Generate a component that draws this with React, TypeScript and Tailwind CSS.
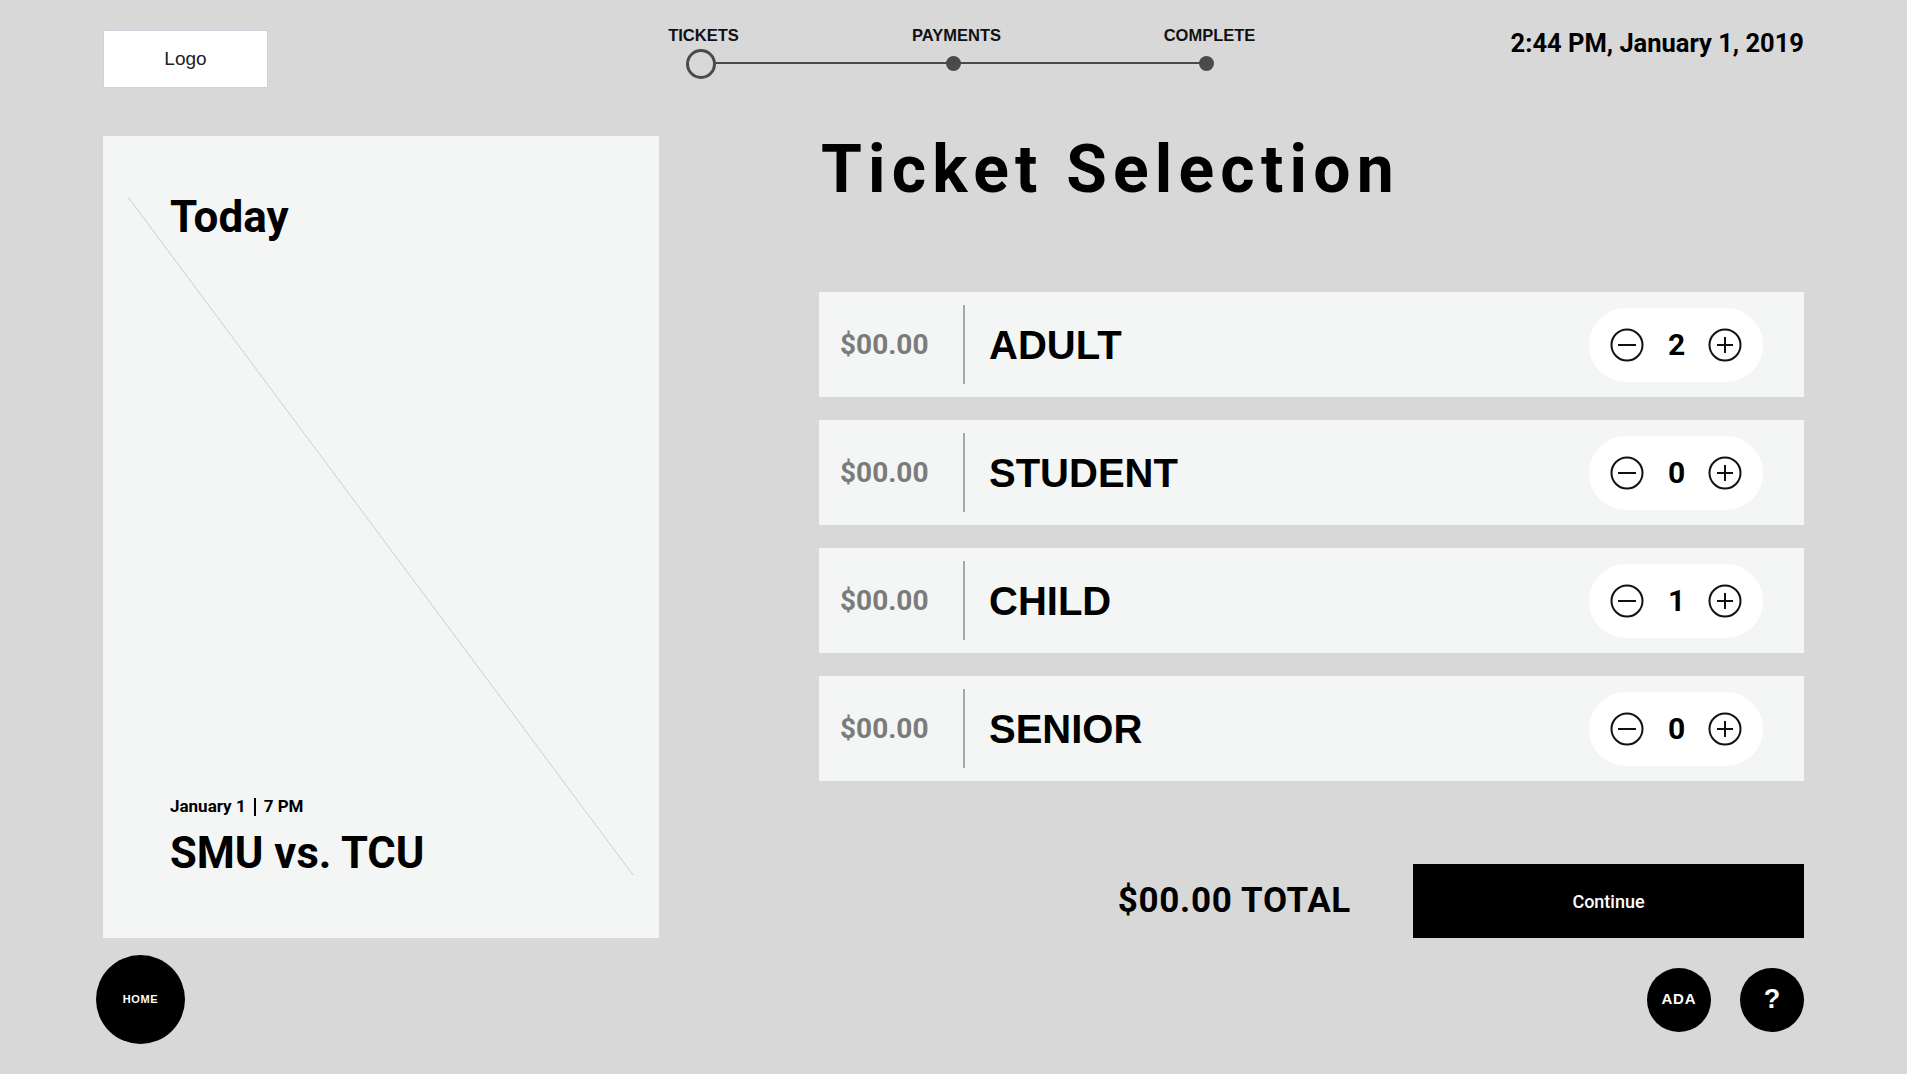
import React from "react";

const tickets = [
    { name: "ADULT", price: "$00.00", qty: 2 },
    { name: "STUDENT", price: "$00.00", qty: 0 },
    { name: "CHILD", price: "$00.00", qty: 1 },
    { name: "SENIOR", price: "$00.00", qty: 0 },
];

const steps = ["TICKETS", "PAYMENTS", "COMPLETE"];

function MinusIcon() {
    return (
        <svg width="34" height="34" viewBox="0 0 34 34" fill="none">
            <circle cx="17" cy="17" r="15.5" stroke="#111" strokeWidth="2" />
            <line x1="8" y1="17" x2="26" y2="17" stroke="#111" strokeWidth="2" />
        </svg>
    );
}

function PlusIcon() {
    return (
        <svg width="34" height="34" viewBox="0 0 34 34" fill="none">
            <circle cx="17" cy="17" r="15.5" stroke="#111" strokeWidth="2" />
            <line x1="9" y1="17" x2="25" y2="17" stroke="#111" strokeWidth="2" />
            <line x1="17" y1="9" x2="17" y2="25" stroke="#111" strokeWidth="2" />
        </svg>
    );
}

function Stepper() {
    return (
        <div className="relative w-[759px] flex font-['Liberation_Sans',Arial,sans-serif]">
            <div className="absolute left-[126px] right-[126px] top-[36px] h-[2px] bg-[#4a4a4a]" />
            {steps.map((s, i) => (
                <div key={s} className="w-[253px] flex flex-col items-center">
                    <span className="mt-[1px] ml-[6px] text-[16.5px] leading-none font-bold text-[#111]">{s}</span>
                    <div className="mt-[5px] h-[30px] flex items-center justify-center relative z-10">
                        {i === 0 ? (
                            <div className="w-[30px] h-[30px] rounded-full border-[3px] border-[#4a4a4a] bg-[#d8d8d8]" />
                        ) : (
                            <div className="w-[15px] h-[15px] rounded-full bg-[#4a4a4a]" />
                        )}
                    </div>
                </div>
            ))}
        </div>
    );
}

function TicketRow({ name, price, qty }: { name: string; price: string; qty: number }) {
    return (
        <div className="h-[105px] bg-[#f4f6f5] flex items-center pr-[41px]">
            <div className="w-[144px] pl-[21px] font-['Roboto',sans-serif] text-[28px] font-bold text-[#7b7b7b]">
                {price}
            </div>
            <div className="w-[2px] h-[79px] bg-[#a8a8a8]" />
            <div className="ml-[24px] flex-1 font-['Liberation_Sans',Arial,sans-serif] text-[40px] font-bold text-black">
                {name}
            </div>
            <div className="w-[174px] h-[74px] rounded-full bg-white flex items-center px-[21px] gap-[24px]">
                <MinusIcon />
                <span className="w-[16px] text-center font-['Roboto',sans-serif] text-[30px] font-bold leading-none">
                    {qty}
                </span>
                <PlusIcon />
            </div>
        </div>
    );
}

export default function App() {
    return (
        <div className="w-[1907px] h-[1074px] bg-[#d8d8d8] px-[103px] pt-[26px] overflow-hidden font-['Roboto',sans-serif] text-black">
            {/* header */}
            <div className="grid grid-cols-[1fr_auto_1fr] items-start">
                <div className="mt-[4px] w-[165px] h-[58px] bg-white border border-[#cdd3dc] rounded-[2px] flex items-center justify-center font-['Liberation_Sans',Arial,sans-serif] text-[19px] text-[#222]">
                    Logo
                </div>
                <Stepper />
                <div className="mt-[2px] text-right text-[25.5px] leading-[30px] font-bold">
                    2:44 PM, January 1, 2019
                </div>
            </div>

            {/* main */}
            <div className="mt-[48px] h-[802px] flex">
                <div className="relative w-[556px] h-full bg-[#f4f6f5] flex flex-col justify-between px-[67px] pt-[59px] pb-[63px]">
                    <svg className="absolute inset-0" width="556" height="802" viewBox="0 0 556 802">
                        <line x1="25" y1="61" x2="530" y2="739" stroke="#cbced8" strokeWidth="1" />
                    </svg>
                    <h2 className="relative text-[44px] leading-none font-bold">Today</h2>
                    <div className="relative">
                        <div className="flex items-center text-[17px] leading-none font-bold">
                            <span>January 1</span>
                            <span className="mx-[8px] w-[2px] h-[18px] bg-black" />
                            <span>7 PM</span>
                        </div>
                        <div className="mt-[16px] text-[43.5px] leading-none font-bold">SMU vs. TCU</div>
                    </div>
                </div>

                <div className="ml-[160px] flex-1 flex flex-col">
                    <h1 className="mt-[1px] ml-[2px] text-[66px] leading-none font-bold tracking-[0.094em]">Ticket Selection</h1>
                    <div className="mt-[89px] flex flex-col gap-[23px]">
                        {tickets.map(t => (
                            <TicketRow key={t.name} {...t} />
                        ))}
                    </div>
                    <div className="mt-auto flex items-center justify-end">
                        <span className="mr-[62px] text-[35px] font-bold tracking-[0.02em]">$00.00 TOTAL</span>
                        <button className="w-[391px] h-[74px] bg-black text-white text-[18px] font-medium">
                            Continue
                        </button>
                    </div>
                </div>
            </div>

            {/* footer */}
            <div className="mt-[17px] flex items-center justify-between font-['Liberation_Sans',Arial,sans-serif]">
                <button className="-ml-[7px] w-[89px] h-[89px] rounded-full bg-black text-white text-[11px] font-bold tracking-[0.06em]">
                    HOME
                </button>
                <div className="flex items-center gap-[29px]">
                    <button className="w-[64px] h-[64px] rounded-full bg-black text-white text-[15px] font-bold tracking-[0.06em]">
                        ADA
                    </button>
                    <button className="w-[64px] h-[64px] rounded-full bg-black text-white text-[27px] font-bold">
                        ?
                    </button>
                </div>
            </div>
        </div>
    );
}
